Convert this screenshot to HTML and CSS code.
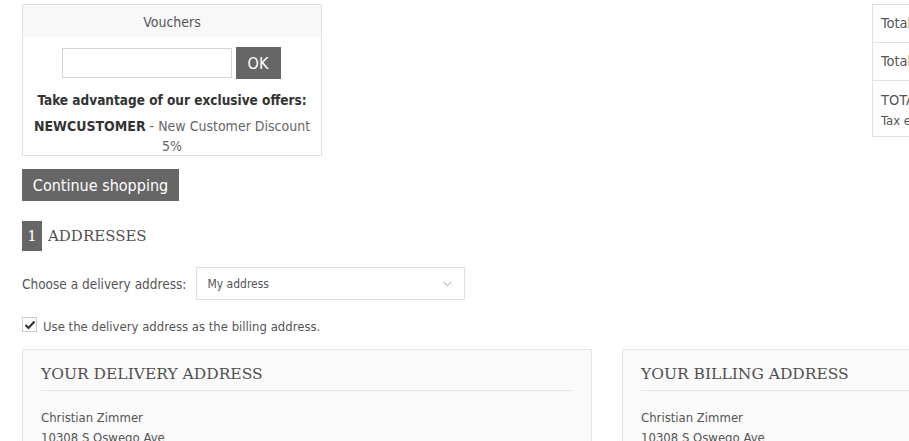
FILE: index.html
```html
<!DOCTYPE html>
<html>
<head>
<meta charset="utf-8">
<link rel="stylesheet" href="styles.css">
</head>
<body>
<div class="page">
  <div class="top">
    <div class="vouchers">
      <div class="v-head">Vouchers</div>
      <div class="v-body">
        <div class="v-form"><input class="v-input" type="text"><button class="btn ok">OK</button></div>
        <div class="v-title">Take advantage of our exclusive offers:</div>
        <div class="v-offer"><b>NEWCUSTOMER</b> - New Customer Discount 5%</div>
      </div>
    </div>
    <div class="totals">
      <div class="t-row">Total products</div>
      <div class="t-row">Total shipping</div>
      <div class="t-row t-last">TOTAL<br><span>Tax excl.</span></div>
    </div>
  </div>
  <button class="btn continue">Continue shopping</button>
  <h2 class="step"><span class="num">1</span><span class="step-title">ADDRESSES</span></h2>
  <div class="choose">
    <label class="choose-label">Choose a delivery address:</label>
    <div class="select">My address<svg class="chev" width="9" height="6" viewBox="0 0 9 6"><path d="M0.5 0.8 L4.5 4.8 L8.5 0.8" fill="none" stroke="#9a9a9a" stroke-width="1"/></svg></div>
  </div>
  <div class="check">
    <span class="box"><svg width="12" height="10" viewBox="0 0 12 10"><path d="M1.5 5 L4.5 8 L10.5 1.5" fill="none" stroke="#333" stroke-width="2.2"/></svg></span>
    <span class="check-text">Use the delivery address as the billing address.</span>
  </div>
  <div class="addresses">
    <div class="addr">
      <h3 class="addr-title">YOUR DELIVERY ADDRESS</h3>
      <div class="addr-line">Christian Zimmer</div>
      <div class="addr-line">10308 S Oswego Ave</div>
    </div>
    <div class="addr billing">
      <h3 class="addr-title">YOUR BILLING ADDRESS</h3>
      <div class="addr-line">Christian Zimmer</div>
      <div class="addr-line">10308 S Oswego Ave</div>
    </div>
  </div>
</div>
</body>
</html>
```
FILE: styles.css
```css
html, body { margin: 0; padding: 0; background: #fff; overflow: hidden; }
body { font-family: "DejaVu Sans Condensed", "DejaVu Sans", sans-serif; font-size: 13px; color: #555; }
.page { padding: 4px 0 0 22px; width: 1000px; }
.top { display: flex; justify-content: space-between; width: 950px; }
.vouchers { border: 1px solid #e0e0e0; text-align: center; height: 152px; box-sizing: border-box; width: 300px; }
.v-head { background: #f8f8f8; height: 33px; line-height: 34px; font-size: 14px; color: #555; }
.v-body { padding-top: 9px; }
.v-form { display: flex; justify-content: center; align-items: center; gap: 4px; margin-left: -2px; }
.v-input { width: 170px; height: 30px; box-sizing: border-box; border: 1px solid #d6d4d4; margin: 0; padding: 0; }
.btn { background: #666; color: #fff; border: 0; font-family: inherit; font-size: 16px; margin: 0; padding: 0; cursor: pointer; }
.ok { width: 45px; height: 32px; }
.v-title { font-weight: bold; color: #333; margin-top: 11px; line-height: 20px; font-size: 13.5px; }
.v-offer { line-height: 20px; margin-top: 6px; padding: 0 6px; color: #666; font-size: 14px; }
.v-offer b { color: #333; }
.totals { width: 100px; border: 1px solid #e0e0e0; border-right: 0; height: 133px; box-sizing: border-box; overflow: hidden; white-space: nowrap; }
.t-row { padding: 0 0 0 8px; height: 37px; line-height: 37px; border-bottom: 1px solid #e0e0e0; color: #555; font-size: 14.5px; }
.t-last { border-bottom: 0; line-height: 20px; padding-top: 9px; height: auto; }
.t-last span { font-size: 13px; }
.continue { display: block; margin-top: 13px; height: 32px; width: 157px; }
.step { margin: 20px 0 0; display: flex; align-items: center; font-weight: normal; height: 30px; }
.num { background: #666; color: #fff; width: 20px; height: 30px; line-height: 30px; text-align: center; font-family: "DejaVu Serif", serif; font-size: 15px; }
.step-title { font-family: "DejaVu Serif", serif; font-size: 15px; color: #4f4f4f; margin-left: 6px; }
.choose { display: flex; align-items: center; margin-top: 16px; }
.choose-label { margin-right: 10px; font-size: 13.5px; }
.select { width: 269px; height: 33px; box-sizing: border-box; border: 1px solid #e0e0e0; display: flex; align-items: center; justify-content: space-between; padding: 0 12px 0 10px; font-size: 12px; color: #555; }
.check { display: flex; align-items: flex-start; margin-top: 17px; }
.box { width: 13px; height: 13px; border: 1px solid #ccc; display: inline-flex; align-items: center; justify-content: center; margin-right: 6px; background: #fff; flex-shrink: 0; }
.check-text { line-height: 16px; margin-top: 2px; }
.addresses { display: flex; gap: 30px; margin-top: 14px; }
.addr { width: 570px; box-sizing: border-box; border: 1px solid #e5e5e5; background: #fafafa; padding: 14px 18px 0; height: 120px; flex-shrink: 0; }
.addr-title { margin: 0; font-family: "DejaVu Serif", serif; font-weight: normal; font-size: 15.5px; color: #4f4f4f; padding-bottom: 6px; border-bottom: 1px solid #e5e5e5; line-height: 20px; }
.addr-line { line-height: 20px; }
.addr-title + .addr-line { margin-top: 17px; }
```
